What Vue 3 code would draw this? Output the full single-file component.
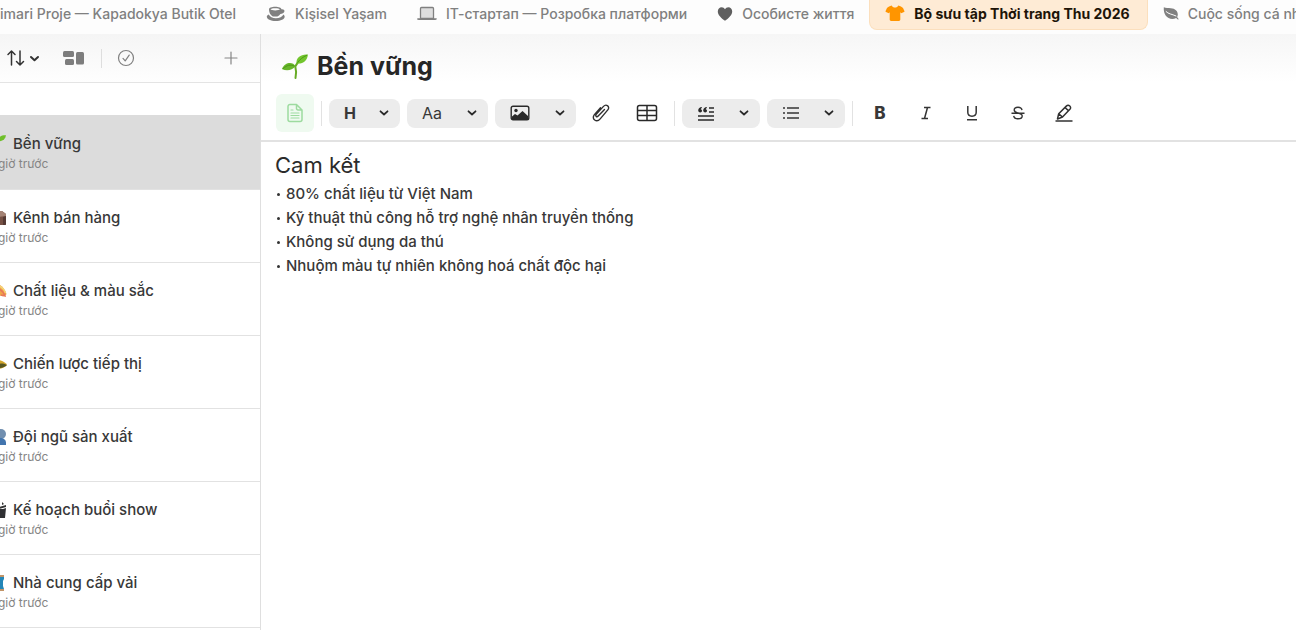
<template>
  <div class="app">
    <nav class="tabs" aria-label="Projects">
      <a
        v-for="tab in tabs"
        :key="tab.title"
        href="#"
        class="tab"
        :class="{ active: tab.active }"
        @click.prevent
      >
        <svg v-if="tab.icon === 'cup'" class="tab-icon" viewBox="0 0 20 16" fill="currentColor">
          <path d="M3 3.300C3 1.800 5.600.8 9.200.8s6.200 1 6.200 2.500c2.300-.3 3.400.7 3 2.300-.4 1.600-2.200 2.500-4 2.500-.8 1.200-1.800 2.100-3 2.500H7.300C4.800 9.800 3 6.800 3 3.300zm1.500 0c.4.700 2.400 1.200 4.700 1.200s4.300-.5 4.700-1.200c-.4-.7-2.400-1.100-4.700-1.100s-4.300.4-4.700 1.100z" />
          <path d="M2.800 8.600C1.500 9.100.8 9.900.8 10.700c0 2.400 4 4.300 8.900 4.300s9-1.900 9-4.300c0-.8-.5-1.500-1.300-2.100-1 2.200-3.900 3.700-7.500 3.700-3.300 0-6.200-1.600-7.100-3.700z" />
        </svg>
        <svg v-else-if="tab.icon === 'laptop'" class="tab-icon" viewBox="0 0 20 16">
          <path d="M3.500 12.500v-10a1 1 0 0 1 1-1h11a1 1 0 0 1 1 1v10z" fill="#dedede" stroke="currentColor" stroke-width="1.300" />
          <path d="M.3 12.200h19.400v.5c0 .8-.5 1.200-1.300 1.200H1.600c-.8 0-1.300-.4-1.300-1.200z" fill="currentColor" />
        </svg>
        <svg v-else-if="tab.icon === 'heart'" class="tab-icon narrow" viewBox="0 0 16 16" fill="#5f5f5f">
          <path d="M8 14.800C4 12 .8 8.900.8 5.500.8 3 2.500 1.200 4.700 1.200c1.400 0 2.600.8 3.300 2 .7-1.200 1.900-2 3.300-2 2.200 0 3.900 1.800 3.900 4.300 0 3.400-3.200 6.500-7.200 9.300z" />
        </svg>
        <svg v-else-if="tab.icon === 'shirt'" class="tab-icon" viewBox="0 0 20 16" fill="#ff9500">
          <path d="M6.700.4C7.400 1.800 8.500 2.500 10 2.500s2.600-.7 3.300-2.100c2 .5 3.500 1.200 4.700 2.500L19.400 6c.2.500.1.900-.4 1.100l-2.700 1.200-1-1v7.200c0 .9-.5 1.400-1.400 1.400H6.100c-.9 0-1.400-.5-1.400-1.400V7.300l-1 1L1 7.100C.5 6.900.4 6.500.6 6L2 2.900C3.200 1.600 4.700.9 6.700.4z" />
        </svg>
        <svg v-else-if="tab.icon === 'leaf'" class="tab-icon narrow" viewBox="0 0 16 16">
          <path d="M.8 1.300c2.100.9 4.400.7 7 .9 4.300.3 7 2.800 7 6.200 0 1.200-.3 2-.7 2.700l1.500 2-.5.700-2-1.700c-1.200.7-2.500.9-3.800.9C4 13 .2 8.400.8 1.300z" fill="currentColor" />
          <path d="M2.800 5.300c2.800 2.900 5.800 2.600 10.500 4.800" fill="none" stroke="#fdfdfd" stroke-width="1" />
        </svg>
        <span>{{ tab.title }}</span>
      </a>
    </nav>

    <div class="workspace">
      <aside class="sidebar">
        <div class="sidebar-bar">
          <button class="plain sort" aria-label="Sort">
            <svg width="34" height="20" viewBox="0 0 34 20" fill="none" stroke="#333" stroke-width="1.500" stroke-linecap="round" stroke-linejoin="round">
              <path d="M5.500 17V3M2 6.500 5.500 3 9 6.500M14 3v14M10.500 13.500 14 17l3.500-3.500" />
              <path d="M25 9l3.500 3.300L32 9" stroke-width="2" />
            </svg>
          </button>
          <button class="plain layout" aria-label="Layout">
            <svg width="22" height="16" viewBox="0 0 22 16" fill="#7d7d7d">
              <rect x="0" y="1" width="11" height="6" rx="1.500" />
              <rect x="2" y="9" width="9" height="6" rx="1.500" />
              <rect x="13" y="2" width="8" height="12.500" rx="1.500" />
            </svg>
          </button>
          <span class="bar-line"></span>
          <button class="plain" aria-label="Select">
            <svg width="18" height="18" viewBox="0 0 18 18" fill="none" stroke="#808080" stroke-width="1.200" stroke-linecap="round" stroke-linejoin="round">
              <circle cx="9" cy="9" r="7.500" />
              <path d="M6 9.400l2.200 2.500 4-5.800" />
            </svg>
          </button>
          <button class="plain add" aria-label="Add">
            <svg width="14" height="14" viewBox="0 0 14 14" stroke="#858585" stroke-width="1.200" stroke-linecap="round">
              <path d="M7 1v12M1 7h12" />
            </svg>
          </button>
        </div>

        <ul class="notes">
          <li v-for="note in notes" :key="note.title">
            <a href="#" class="note" :class="{ selected: note.title === selected }" @click.prevent="selected = note.title">
              <span class="note-title">
                <svg class="note-icon" viewBox="0 0 18 18">
                  <g v-if="note.icon === 'plant'">
                    <path d="M8 6.500C8.500 2.500 12 0 17 .3c-.5 4-4 6.500-9 6.200z" fill="#6fbf2a" />
                    <path d="M9 17V8" stroke="#67ab25" stroke-width="1.500" />
                  </g>
                  <g v-else-if="note.icon === 'bag'">
                    <path d="M1 2h12l4 3v10a1 1 0 0 1-1 1H1z" fill="#765145" />
                    <path d="M1 2h12l4 3v2L1 9z" fill="#a48375" />
                    <path d="M14 8l3-1v8a1 1 0 0 1-1 1h-2z" fill="#553a34" />
                  </g>
                  <g v-else-if="note.icon === 'thread'">
                    <path d="M8 2c4 0 8 5 9.500 10-1 3-6 3-9.500 0z" fill="#efa548" />
                    <path d="M10 7c4 2 5 4 6 7l-4-1" fill="none" stroke="#e8775a" stroke-width="1.500" />
                    <path d="M10 4c3 1 5 3 6.500 7" fill="none" stroke="#f5d477" stroke-width="1.500" />
                  </g>
                  <g v-else-if="note.icon === 'horn'">
                    <path d="M8 5c4 0 8 2 10 5-3 3-6 4-10 4z" fill="#d4a62a" />
                    <path d="M9 9c4-1 7 0 9 1-2 2-5 3-8 3z" fill="#575621" />
                  </g>
                  <g v-else-if="note.icon === 'team'">
                    <circle cx="12" cy="6" r="5" fill="#718fb0" />
                    <path d="M4 17v-3c0-3 3-4 7-4s6 2 6 5v2z" fill="#4275ae" />
                  </g>
                  <g v-else-if="note.icon === 'clapper'">
                    <path d="M1 8h13l3-1-1 10H1z" fill="#2f3033" />
                    <path d="M10 6l7-2v2l-7 2zM13 1l2 2-2 1M16 0l1 3" fill="#333" />
                  </g>
                  <g v-else>
                    <path d="M9 3h6v2l-1 2v5l1 3v2H9z" fill="#2386b8" />
                    <path d="M9 1h6v2H9zM9 15h6v2H9z" fill="#c29468" />
                  </g>
                </svg>
                {{ note.title }}
              </span>
              <span class="note-time">giờ trước</span>
            </a>
          </li>
        </ul>
      </aside>

      <main class="editor">
        <header class="editor-head">
          <h1>
            <svg width="28" height="28" viewBox="0 0 28 28">
              <path d="M14.500 26c1-4.500.8-8-.2-11.500.9-2 2-3.500 3.500-5" fill="none" stroke="#67ab25" stroke-width="2" stroke-linecap="round" />
              <path d="M14.600 14.200C12 9.300 4 9.500.8 17c5.200 2.300 10.300 1.200 13.800-2.800z" fill="#68b62a" />
              <path d="M15.500 11.500C14.800 5.500 20 1.800 27 2.500c-1 6.500-5 9.800-11.500 9z" fill="#72c52d" />
              <path d="M2 16.700c4-3.700 7.200-4.300 11.300-2.700M16.500 10.700c2.500-3.500 5.400-5.700 9.500-7.500" fill="none" stroke="#4d9818" stroke-width="1" />
            </svg>
            Bền vững
          </h1>
          <div class="toolbar">
            <button class="doc" aria-label="Document">
              <svg width="16" height="20" viewBox="0 0 16 20" fill="none" stroke="#9ddb9f" stroke-width="1.500" stroke-linejoin="round" stroke-linecap="round">
                <path d="M3 1.500h6.500L15 7v9.500a2 2 0 0 1-2 2H3a2 2 0 0 1-2-2v-13a2 2 0 0 1 2-2zM9.500 1.500v4A1.500 1.500 0 0 0 11 7h4" />
                <path d="M4 7h2M4 10h8M4 12.500h8M4 15h8" stroke-width="1.200" />
              </svg>
            </button>
            <span class="line"></span>
            <button class="pill heading"><b>H</b><svg class="chevron" viewBox="0 0 10 6"><path d="M1.500 1.300 5 4.500l3.500-3.200" /></svg></button>
            <button class="pill font"><span>Aa</span><svg class="chevron" viewBox="0 0 10 6"><path d="M1.500 1.300 5 4.500l3.500-3.200" /></svg></button>
            <button class="pill image" aria-label="Image">
              <svg width="20" height="16" viewBox="0 0 20 16">
                <rect x="1.200" y="1.200" width="17.600" height="13.600" rx="1.800" fill="none" stroke="#292929" stroke-width="1.400" />
                <circle cx="6" cy="5.500" r="1.700" fill="#292929" />
                <path d="M2 14v-2.500l3-2.600 2.500 1.700L12.500 6l5.500 5v3z" fill="#292929" />
              </svg>
              <svg class="chevron" viewBox="0 0 10 6"><path d="M1.500 1.300 5 4.500l3.500-3.200" /></svg>
            </button>
            <button class="tool" aria-label="Attach">
              <svg width="18" height="20" viewBox="0 0 18 20" fill="none" stroke="#303030" stroke-width="1.400" stroke-linecap="round">
                <path d="M12.500 6.500 6.200 13c-1.500 1.600-3.300 0-2-1.600l7.300-8c2.800-3 6.900.4 4.300 3.500l-7.600 9c-3.700 4.200-9 .2-6-4L8.500 4.700" />
              </svg>
            </button>
            <button class="tool" aria-label="Table">
              <svg width="22" height="18" viewBox="0 0 22 18" fill="none" stroke="#292929" stroke-width="1.500">
                <rect x="1.500" y="1.500" width="19" height="15" rx="2" />
                <path d="M1.500 6.500h19M1.500 11.500h19M11 1.500v15" />
              </svg>
            </button>
            <span class="line"></span>
            <button class="pill block" aria-label="Quote">
              <svg width="18" height="16" viewBox="0 0 18 16">
                <path d="M1 15h16M1 11h16M12 7h5M12 3h5" stroke="#292929" stroke-width="1.400" />
                <path d="M4.700 2C3 2.300 1.200 3.300 1.200 5.300c0 1.300.8 2.200 2 2.200 1 0 1.800-.7 1.800-1.700 0-.8-.5-1.400-1.300-1.600.1-.6.5-1 1.200-1.300zM9.700 2C8 2.300 6.200 3.300 6.200 5.300c0 1.300.8 2.200 2 2.200 1 0 1.800-.7 1.800-1.700 0-.8-.5-1.400-1.300-1.600.1-.6.5-1 1.200-1.300z" fill="#292929" />
              </svg>
              <svg class="chevron" viewBox="0 0 10 6"><path d="M1.500 1.300 5 4.500l3.500-3.200" /></svg>
            </button>
            <button class="pill block" aria-label="List">
              <svg width="18" height="14" viewBox="0 0 18 14" stroke="#353535" stroke-width="1.300">
                <path d="M5 2h12M5 7h12M5 12h12" />
                <path d="M1 2h2M1 7h2M1 12h2" stroke-width="1.600" />
              </svg>
              <svg class="chevron" viewBox="0 0 10 6"><path d="M1.500 1.300 5 4.500l3.500-3.200" /></svg>
            </button>
            <span class="line"></span>
            <button class="tool bold"><b>B</b></button>
            <button class="tool" aria-label="Italic">
              <svg width="12" height="14" viewBox="0 0 12 14" fill="none" stroke="#353535" stroke-width="1.500">
                <path d="M4 1.500h6.500M1.500 12.500H8M7.500 1.500l-3 11" />
              </svg>
            </button>
            <button class="tool" aria-label="Underline">
              <svg width="14" height="16" viewBox="0 0 14 16" fill="none" stroke="#353535" stroke-width="1.500">
                <path d="M2.800 1v6.300c0 5.200 8.400 5.200 8.400 0V1M2 14.700h10" />
              </svg>
            </button>
            <button class="tool" aria-label="Strikethrough">
              <svg width="14" height="14" viewBox="0 0 14 14" fill="none" stroke="#353535" stroke-width="1.400">
                <path d="M11 4.200C10.700 2.300 9.200 1.200 7 1.200S3.200 2.300 3.200 4c0 1.800 1.500 2.500 3.800 3s4.200 1.200 4.200 3c0 1.700-1.700 2.800-4.100 2.800S3 11.700 2.700 9.800M.5 7.200h13" />
              </svg>
            </button>
            <button class="tool" aria-label="Highlight">
              <svg width="18" height="20" viewBox="0 0 18 20" fill="none" stroke="#303030" stroke-width="1.500" stroke-linejoin="round">
                <path d="M2.500 16l1.200-5.300 7.600-7.600c2.300-2.300 5.800.8 3.600 3.200L7.500 14zM10 4.500l3.700 3.400M3.700 10.700 7.500 14" />
                <path d="M.5 18h17" />
              </svg>
            </button>
          </div>
        </header>

        <article class="content">
          <h2>Cam kết</h2>
          <ul>
            <li v-for="item in commitments" :key="item">{{ item }}</li>
          </ul>
        </article>
      </main>
    </div>
  </div>
</template>

<script setup>
import { ref } from 'vue'

const selected = ref('Bền vững')

const tabs = [
  { title: 'imari Proje — Kapadokya Butik Otel' },
  { title: 'Kişisel Yaşam', icon: 'cup' },
  { title: 'ІТ-стартап — Розробка платформи', icon: 'laptop' },
  { title: 'Особисте життя', icon: 'heart' },
  { title: 'Bộ sưu tập Thời trang Thu 2026', icon: 'shirt', active: true },
  { title: 'Cuộc sống cá nhân', icon: 'leaf' }
]

const notes = [
  { title: 'Bền vững', icon: 'plant' },
  { title: 'Kênh bán hàng', icon: 'bag' },
  { title: 'Chất liệu & màu sắc', icon: 'thread' },
  { title: 'Chiến lược tiếp thị', icon: 'horn' },
  { title: 'Đội ngũ sản xuất', icon: 'team' },
  { title: 'Kế hoạch buổi show', icon: 'clapper' },
  { title: 'Nhà cung cấp vải', icon: 'spool' }
]

const commitments = [
  '80% chất liệu từ Việt Nam',
  'Kỹ thuật thủ công hỗ trợ nghệ nhân truyền thống',
  'Không sử dụng da thú',
  'Nhuộm màu tự nhiên không hoá chất độc hại'
]
</script>

<style>
body {
  margin: 0;
  background: #fff;
}
</style>

<style scoped>
.app {
  display: flex;
  flex-direction: column;
  height: 100vh;
  overflow: hidden;
  font-family: Inter, "Noto Sans", sans-serif;
  color: #383838;
}

button {
  border: 0;
  padding: 0;
  background: none;
  font-family: inherit;
  color: inherit;
}

a {
  color: inherit;
  text-decoration: none;
}

svg {
  display: block;
  flex: none;
}

ul {
  margin: 0;
  padding: 0;
  list-style: none;
}

/* 顶部标签栏 */
.tabs {
  display: flex;
  flex: none;
  height: 34px;
  overflow: hidden;
  background: #fdfdfd;
}

.tab {
  display: flex;
  align-items: center;
  flex: none;
  gap: 9px;
  height: 27px;
  padding: 0 15px;
  font-size: 14px;
  font-weight: 500;
  white-space: nowrap;
  color: #808080;
}

.tab:first-child {
  padding-left: 0;
}

.tab.active {
  box-sizing: border-box;
  height: 30px;
  padding: 0 17px 3px 15px;
  border: 1px solid #fbdfbd;
  border-top: 0;
  border-radius: 0 0 8px 8px;
  background: #feebd5;
  font-weight: 700;
  color: #1d1408;
}

.tab-icon {
  width: 20px;
  height: 16px;
}

.tab-icon.narrow {
  width: 16px;
}

/* 主体 */
.workspace {
  display: flex;
  flex: 1;
  min-height: 0;
}

.sidebar {
  flex: none;
  width: 260px;
  border-right: 1px solid #dfdfdf;
  overflow: hidden;
}

.sidebar-bar {
  display: flex;
  align-items: center;
  height: 48px;
  padding: 0 22px 0 6px;
  border-bottom: 1px solid #e4e4e4;
  background: linear-gradient(#f5f5f5, #fefefe);
}

.layout {
  margin-left: 23px;
}

.bar-line {
  width: 1px;
  height: 19px;
  margin: 0 15px 0 16px;
  background: #dedede;
}

.add {
  margin-left: auto;
}

.notes {
  margin-top: 32px;
  border-bottom: 1px solid #e2e2e2;
}

.note {
  display: flex;
  flex-direction: column;
  box-sizing: border-box;
  height: 73px;
  padding-top: 17px;
  border-top: 1px solid #e2e2e2;
}

.note.selected {
  height: 74px;
  border-top-color: #dcdcdc;
  background: #dcdcdc;
}

.note-title {
  display: flex;
  align-items: center;
  gap: 6px;
  font-size: 15px;
  font-weight: 500;
  line-height: 22px;
  white-space: nowrap;
}

.note-icon {
  width: 18px;
  height: 18px;
  margin-left: -11px;
}

.note-time {
  margin-left: -2px;
  font-size: 12px;
  line-height: 18px;
  color: #858585;
}

/* 编辑区 */
.editor {
  flex: 1;
  min-width: 0;
}

.editor-head {
  height: 106px;
  border-bottom: 2px solid #e2e2e2;
  background: linear-gradient(#f6f6f6, #fff 48px);
}

h1 {
  display: flex;
  align-items: center;
  gap: 8px;
  margin: 0;
  padding: 16px 0 12px 20px;
  font-size: 25px;
  line-height: 32px;
  font-weight: 700;
  color: #262626;
}

.toolbar {
  display: flex;
  align-items: center;
  height: 38px;
  padding-left: 15px;
}

.doc {
  display: flex;
  align-items: center;
  justify-content: center;
  width: 38px;
  height: 38px;
  border-radius: 6px;
  background: #effaf0;
}

.line {
  width: 1px;
  height: 25px;
  margin: 0 7px;
  background: #e2e2e2;
}

.tool + .line {
  margin-left: 4px;
}

.pill {
  display: flex;
  align-items: center;
  justify-content: space-between;
  box-sizing: border-box;
  height: 29px;
  margin-right: 7px;
  padding: 0 11px 0 15px;
  border-radius: 8px;
  background: #ececec;
  font-size: 16px;
}

.heading {
  width: 71px;
}

.heading b {
  font-weight: 700;
}

.font,
.image {
  width: 81px;
}

.image {
  margin-right: 2px;
}

.block {
  width: 78px;
}

.block + .line {
  margin: 0 4px 0 0;
}

.chevron {
  width: 10px;
  height: 6px;
  fill: none;
  stroke: #292929;
  stroke-width: 1.8px;
  stroke-linecap: round;
  stroke-linejoin: round;
}

.tool {
  display: flex;
  align-items: center;
  justify-content: center;
  width: 46px;
  height: 29px;
}

.bold {
  font-size: 17px;
}

.bold b {
  font-weight: 800;
}

.content {
  padding: 9px 14px;
}

h2 {
  margin: 0 0 2px;
  font-size: 22px;
  line-height: 29px;
  font-weight: 400;
  color: #2b2b2b;
}

.content li {
  position: relative;
  padding-left: 11px;
  font-size: 15px;
  font-weight: 500;
  line-height: 24px;
}

.content li::before {
  content: '';
  position: absolute;
  top: 11px;
  left: 2px;
  width: 3px;
  height: 3px;
  border-radius: 50%;
  background: #333;
}
</style>
